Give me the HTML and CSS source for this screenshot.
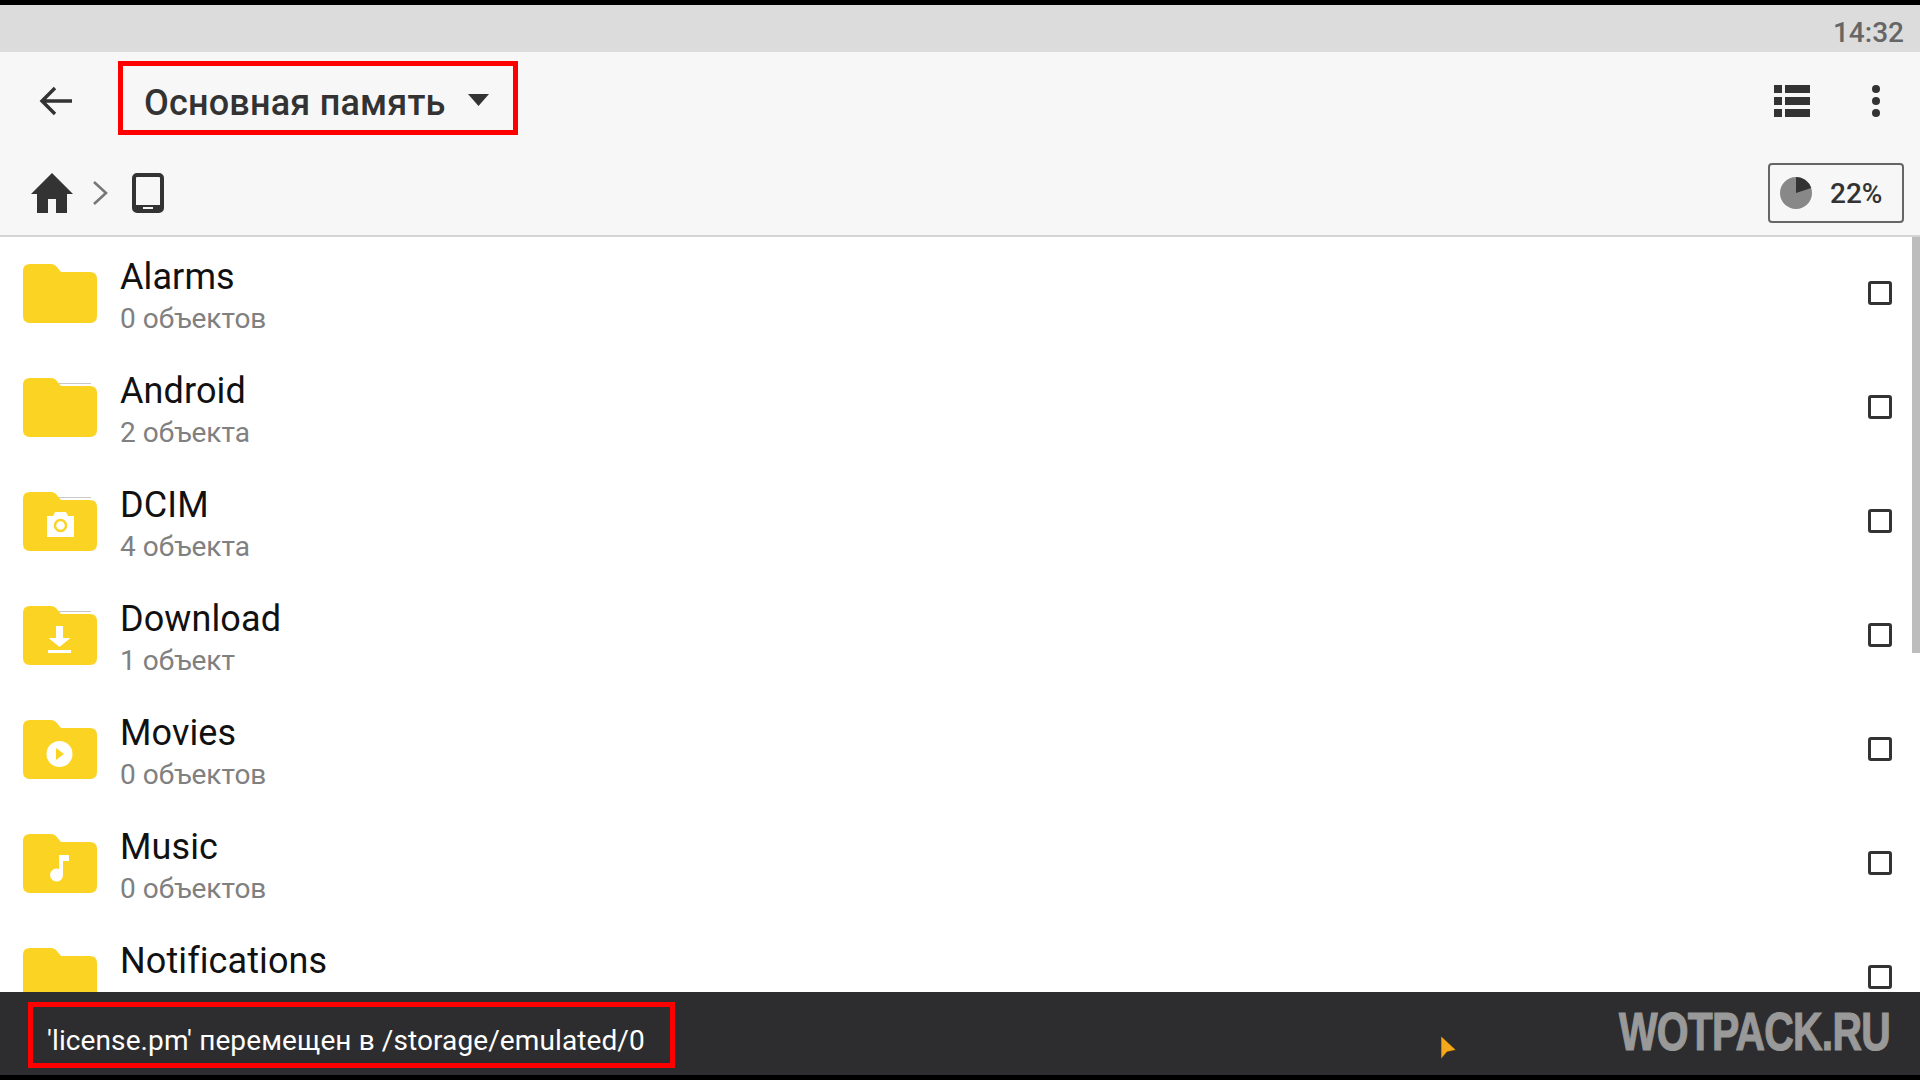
FILE: index.html
```html
<!DOCTYPE html>
<html lang="ru">
<head>
<meta charset="utf-8">
<title>Основная память</title>
<link rel="stylesheet" href="styles.css">
</head>
<body>
<div class="app">
  <div class="edge"></div>
  <div class="status"><span class="time">14:32</span></div>
  <header class="header">
    <div class="toolbar">
      <svg class="back" viewBox="0 0 34 30"><path d="M33 15H3M16 2 3 15l13 13" fill="none" stroke="#333" stroke-width="3.4"/></svg>
      <div class="title-box">
        <span class="title">Основная память</span>
        <svg class="caret" viewBox="0 0 21 12"><path d="M0 0h21L10.500 12z" fill="#333"/></svg>
      </div>
      <div class="spacer"></div>
      <svg class="list-icon" viewBox="0 0 36 32"><path d="M0 0h8v8H0zM11 0h25v8H11zM0 12h8v8H0zM11 12h25v8H11zM0 24h8v8H0zM11 24h25v8H11z" fill="#333"/></svg>
      <svg class="kebab" viewBox="0 0 8 32"><circle cx="4" cy="4" r="4" fill="#333"/><circle cx="4" cy="16" r="4" fill="#333"/><circle cx="4" cy="28" r="4" fill="#333"/></svg>
    </div>
    <div class="crumbs">
      <svg class="home" viewBox="0 0 42 40"><path d="M21 0 42 21H36V40H25V26H17V40H6V21H0z" fill="#333"/></svg>
      <svg class="chev" viewBox="0 0 16 26"><path d="M2 2 14 13 2 24" fill="none" stroke="#777" stroke-width="2.600"/></svg>
      <svg class="tablet" viewBox="0 0 32 40"><rect x="2" y="2" width="28" height="36" rx="3" fill="none" stroke="#333" stroke-width="4"/><rect x="2" y="32" width="28" height="7" fill="#333"/><rect x="11" y="34" width="10" height="2" fill="#f7f7f7"/></svg>
      <div class="spacer"></div>
      <div class="usage">
        <svg class="pie" viewBox="0 0 32 32"><circle cx="16" cy="16" r="16" fill="#888"/><path d="M16 16V0A16 16 0 0 1 31.200 11.100z" fill="#333"/></svg>
        <span>22%</span>
      </div>
    </div>
  </header>
  <main class="list">
    <div class="row">
      <svg class="folder" viewBox="0 0 74 59"><path class="f" d="M7 0h21q3 0 5 2l5 6h29q7 0 7 7v37q0 7-7 7H7q-7 0-7-7V7q0-7 7-7z"/></svg>
      <div class="text"><div class="name">Alarms</div><div class="sub">0 объектов</div></div>
      <span class="check"></span>
    </div>
    <div class="row">
      <svg class="folder" viewBox="0 0 74 59"><path class="f" d="M7 0h21q3 0 5 2l5 6h29q7 0 7 7v37q0 7-7 7H7q-7 0-7-7V7q0-7 7-7z"/><rect class="sheet" x="36" y="5" width="32" height="1"/></svg>
      <div class="text"><div class="name">Android</div><div class="sub">2 объекта</div></div>
      <span class="check"></span>
    </div>
    <div class="row">
      <svg class="folder" viewBox="0 0 74 59"><path class="f" d="M7 0h21q3 0 5 2l5 6h29q7 0 7 7v37q0 7-7 7H7q-7 0-7-7V7q0-7 7-7z"/><rect class="sheet" x="36" y="5" width="32" height="1"/><path d="M24 24h6l2-4h11l2 4h6v21H24z" fill="#fff"/><circle cx="37.500" cy="33.500" r="5.500" fill="none" stroke="#fbd323" stroke-width="2.400"/></svg>
      <div class="text"><div class="name">DCIM</div><div class="sub">4 объекта</div></div>
      <span class="check"></span>
    </div>
    <div class="row">
      <svg class="folder" viewBox="0 0 74 59"><path class="f" d="M7 0h21q3 0 5 2l5 6h29q7 0 7 7v37q0 7-7 7H7q-7 0-7-7V7q0-7 7-7z"/><rect class="sheet" x="36" y="5" width="32" height="1"/><path d="M33 20h7v12h7.500L36.500 41 25.500 32H33zM25 44h23v3H25z" fill="#fff"/></svg>
      <div class="text"><div class="name">Download</div><div class="sub">1 объект</div></div>
      <span class="check"></span>
    </div>
    <div class="row">
      <svg class="folder" viewBox="0 0 74 59"><path class="f" d="M7 0h21q3 0 5 2l5 6h29q7 0 7 7v37q0 7-7 7H7q-7 0-7-7V7q0-7 7-7z"/><circle cx="36.500" cy="34" r="13" fill="#fff"/><path d="M33 28l8 6-8 6z" fill="#fbd323"/></svg>
      <div class="text"><div class="name">Movies</div><div class="sub">0 объектов</div></div>
      <span class="check"></span>
    </div>
    <div class="row">
      <svg class="folder" viewBox="0 0 74 59"><path class="f" d="M7 0h21q3 0 5 2l5 6h29q7 0 7 7v37q0 7-7 7H7q-7 0-7-7V7q0-7 7-7z"/><path d="M36 21h10v6h-6v14a6.500 6.500 0 1 1-4-6z" fill="#fff"/></svg>
      <div class="text"><div class="name">Music</div><div class="sub">0 объектов</div></div>
      <span class="check"></span>
    </div>
    <div class="row">
      <svg class="folder" viewBox="0 0 74 59"><path class="f" d="M7 0h21q3 0 5 2l5 6h29q7 0 7 7v37q0 7-7 7H7q-7 0-7-7V7q0-7 7-7z"/></svg>
      <div class="text"><div class="name">Notifications</div></div>
      <span class="check"></span>
    </div>
    <div class="scrollbar"></div>
  </main>
  <footer class="snack">
    <div class="msg-box">'license.pm' перемещен в /storage/emulated/0</div>
    <div class="spacer"></div>
    <span class="mark">WOTPACK.RU</span>
    <svg class="cursor" viewBox="0 0 16 24"><path d="M0 0 15 14 6 16 0 23z" fill="#f5a81c" stroke="#3a2a10" stroke-width=".6"/></svg>
  </footer>
  <div class="edge bottom"></div>
</div>
</body>
</html>
```

FILE: styles.css
```css
* { box-sizing: border-box; }
html, body { margin: 0; padding: 0; height: 100%; background: #000; }
body { font-family: Roboto, "Noto Sans", sans-serif; }
svg { display: block; flex: none; }

.app { width: 1920px; height: 1080px; display: flex; flex-direction: column; overflow: hidden; }
.edge { height: 5px; background: #000; flex: none; }
.spacer { flex: 1; }

.status { height: 47px; flex: none; background: #dcdcdc; display: flex; align-items: center; justify-content: flex-end; padding: 7px 16px 0 0; }
.time { font-size: 28px; font-weight: 500; color: #666; }

.header { height: 185px; flex: none; background: #f7f7f7; border-bottom: 2px solid #d4d4d4; display: flex; flex-direction: column; }
.toolbar { height: 98px; display: flex; align-items: center; padding: 0 40px 0 39px; }
.back { width: 34px; height: 30px; }
.title-box { width: 400px; height: 74px; margin: 0 0 6px 45px; border: 5px solid #f00; display: flex; align-items: center; padding-left: 21px; }
.title { font-size: 36px; font-weight: 500; letter-spacing: .2px; color: #333; margin-top: 10px; }
.caret { width: 21px; height: 12px; margin: 4px 0 0 22px; }
.list-icon { width: 36px; height: 32px; }
.kebab { width: 8px; height: 32px; margin-left: 62px; }

.crumbs { flex: 1; display: flex; align-items: center; padding: 1px 16px 0 31px; }
.home { width: 42px; height: 40px; }
.chev { width: 16px; height: 26px; margin-left: 19px; }
.tablet { width: 32px; height: 40px; margin-left: 24px; }
.usage { width: 136px; height: 60px; border: 2px solid #666; border-radius: 4px; display: flex; align-items: center; gap: 18px; padding-left: 10px; font-size: 28px; font-weight: 500; color: #333; }
.pie { width: 32px; height: 32px; }

.list { flex: 1; min-height: 0; background: #fff; overflow: hidden; position: relative; }
.row { height: 114px; display: flex; align-items: center; padding: 0 28px 0 23px; }
.row:first-child { margin-top: -1px; }
.folder { width: 74px; height: 59px; }
.f { fill: #fbd323; }
.sheet { fill: #c8c8c8; }
.text { flex: 1; height: 84px; margin: 10px 0 0 23px; }
.name { font-size: 36px; line-height: 42px; letter-spacing: .1px; color: #111; }
.sub { font-size: 28px; line-height: 42px; color: #808080; }
.check { width: 24px; height: 24px; border: 3px solid #333; border-radius: 3px; flex: none; }
.scrollbar { position: absolute; top: 0; right: 0; width: 8px; height: 416px; background: #bdbdbd; }

.snack { height: 83px; flex: none; background: #2d2d2f; display: flex; align-items: center; padding: 0 30px 0 28px; position: relative; }
.msg-box { width: 647px; height: 66px; margin-top: 3px; border: 5px solid #f00; color: #fff; font-size: 28px; letter-spacing: .1px; display: flex; align-items: center; padding: 11px 0 0 14px; }
.mark { font-family: "Liberation Sans", sans-serif; font-weight: 700; font-size: 54px; letter-spacing: -1px; color: #999; -webkit-text-stroke: 1.2px #999; transform: scaleX(.757); transform-origin: right center; margin-bottom: 5px; }
.cursor { position: absolute; left: 1441px; top: 44px; width: 16px; height: 24px; }
```
